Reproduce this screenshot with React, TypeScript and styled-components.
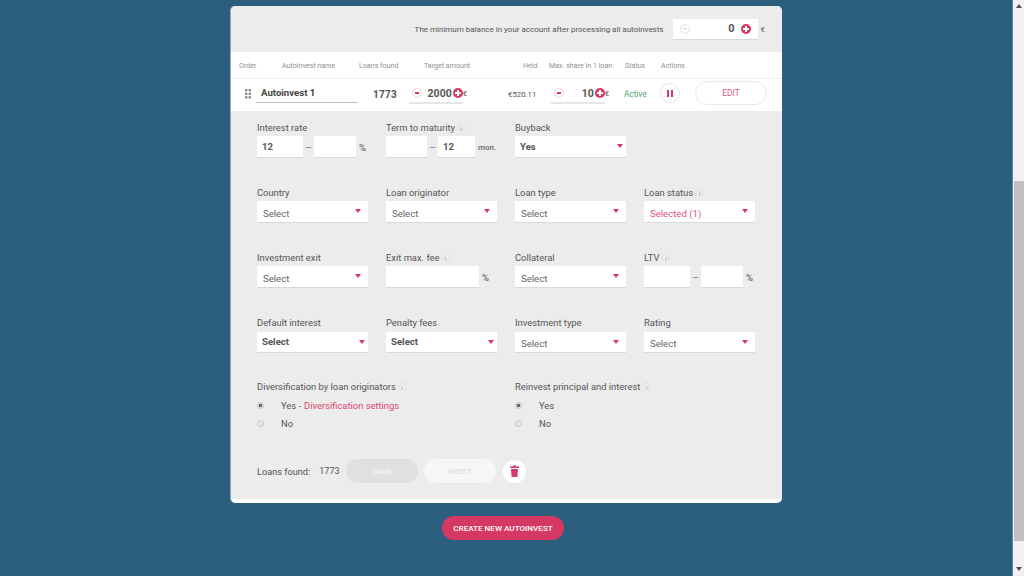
import React from "react";
import styled, { createGlobalStyle } from "styled-components";

const Global = createGlobalStyle`
  html, body { margin: 0; padding: 0; height: 576px; overflow: hidden; }
  body { background: #2c5e7e; font-family: Roboto, "Noto Sans", sans-serif; color: #555; }
  #root { height: 576px; }
  * { box-sizing: border-box; }
`;

const Page = styled.div`display: flex; height: 576px;`;
const Main = styled.main`flex: 1; display: flex; flex-direction: column; align-items: center; padding-top: 6px;`;
const Scrollbar = styled.aside`
  width: 12px; background: #f1f1f1; border-left: 1px solid #5a84a0;
  display: flex; flex-direction: column; align-items: center; padding: 4px 0 5px;
`;
const ArrowUp = styled.div`width: 0; height: 0; border-left: 3px solid transparent; border-right: 3px solid transparent; border-bottom: 4px solid #505050;`;
const ArrowDown = styled.div`width: 0; height: 0; border-left: 3px solid transparent; border-right: 3px solid transparent; border-top: 4px solid #505050;`;
const Thumb = styled.div`width: 10px; height: 360px; background: #c1c1c1; margin: 173px 0 auto;`;

const Card = styled.section`
  width: 552px; height: 497px; background: #fff; border-radius: 5px; overflow: hidden;
  border-left: 1px solid #8fabbd; display: flex; flex-direction: column;
`;
const TopStrip = styled.div`
  height: 46px; background: #ececec; display: flex; align-items: center; justify-content: flex-end;
  padding: 0 17px 0 0; gap: 9px; font-size: 8px; color: #555;
`;
const TopBox = styled.div`
  width: 85px; height: 21px; background: #fff; border-bottom: 1px solid #d9d9d9;
  display: flex; align-items: center; padding: 0 7px; font-size: 11px; font-weight: 700; color: #555;
`;
const Unit = styled.span`font-size: 8px; color: #666;`;
const TopGroup = styled.div`display: flex; align-items: center; gap: 3px;`;

const HeaderRow = styled.div`
  height: 27px; display: flex; align-items: center; padding-left: 8px; border-bottom: 1px solid #eee;
  background: #fff; font-size: 7.1px; color: #8f8f8f;
`;
const HeaderCell = styled.span<{ $w: number }>`width: ${p => p.$w}px; flex: none; white-space: nowrap;`;

const Row = styled.div`height: 32px; display: flex; align-items: center; padding: 0 0 4px 13px; background: #fff;`;
const Drag = styled.svg`width: 8px; height: 10px; flex: none; margin: 2px 4px 0 0;`;
const NameBox = styled.div`
  width: 102px; height: 19px; border-bottom: 1px solid #bbb; padding: 0 0 0 5px; margin-right: 15px;
  font-size: 9.6px; font-weight: 700; line-height: 17px; color: #444; flex: none;
`;
const Found = styled.span`width: 36px; flex: none; margin-top: 2px; font-size: 10px; font-weight: 700; color: #555; letter-spacing: .3px;`;
const Stepper = styled.div`
  width: 54px; height: 21px; flex: none; display: flex; align-items: center; padding: 2px 0 0 3px;
  border-bottom: 2px solid #e6e6e6; font-size: 10.5px; font-weight: 700; color: #555;
`;
const Minus = styled.span<{ $pale?: boolean }>`
  width: 10px; height: 10px; border-radius: 50%; flex: none; background: #fff;
  border: 1px solid ${p => (p.$pale ? "#e4e4e4" : "#f3d6de")}; position: relative;
  &::after { content: ""; position: absolute; left: 2px; top: 3.25px; width: 4px; height: 1.5px; background: ${p => (p.$pale ? "#d8d8d8" : "#d63864")}; }
`;
const Plus = styled.span`
  width: 10px; height: 10px; border-radius: 50%; flex: none; background: #d63864; position: relative; margin-left: 1px;
  &::before { content: ""; position: absolute; left: 2px; top: 4px; width: 6px; height: 2px; background: #fff; }
  &::after { content: ""; position: absolute; left: 4px; top: 2px; width: 2px; height: 6px; background: #fff; }
`;
const TopPlus = styled(Plus)`margin-left: 6px;`;
const Value = styled.span`margin-left: auto;`;
const Euro = styled.span`font-size: 7.5px; color: #777; margin-right: -4px;`;
const Held = styled.span`width: 43px; margin: 2px 0 0 45px; flex: none; font-size: 7.8px; color: #555;`;
const Active = styled.span`width: 36px; margin: 2px 0 0 19px; flex: none; font-size: 8.2px; color: #3fa866;`;
const Pause = styled.button`
  width: 20px; height: 20px; border: 1px solid #e6e6e6; border-radius: 50%; background: #fff; padding: 0; flex: none;
  display: flex; align-items: center; justify-content: center; gap: 2px;
  span { width: 2px; height: 7px; background: #d63864; }
`;
const EditBtn = styled.button`
  width: 72px; height: 24px; margin-left: 15px; border: 1px solid #e9e9e9; border-radius: 12px; background: #fff; flex: none;
  color: #d9577c; font: 400 8.4px Roboto, sans-serif;
`;

const Body = styled.div`
  flex: 1; background: #ececec; padding: 9px 0 0 26px; margin-bottom: 4px; display: flex; flex-direction: column;
`;
const Grid = styled.div`display: grid; grid-template-columns: repeat(4, 129px); grid-template-rows: 38px 38px 39px 37px; row-gap: 27px;`;
const Field = styled.div`display: flex; flex-direction: column;`;
const Label = styled.div`height: 16px; padding-bottom: 2px; display: flex; align-items: center; gap: 3px; font-size: 9.4px; color: #555; white-space: nowrap;`;
const Info = styled.span`
  width: 7px; height: 7px; border-radius: 50%; background: #f8f8f8; color: #d9476f; font-size: 5.5px; line-height: 6px; text-align: center; border: .5px solid #d8d8d8;
`;
const Select = styled.div<{ $bold?: boolean; $red?: boolean }>`
  width: 111px; height: 22px; background: #fff; border-bottom: 1px solid #d9d9d9; position: relative; display: flex; align-items: center;
  padding: ${p => (p.$bold ? "0 0 0 5px" : "3px 0 0 6px")}; font-size: 9.6px; font-weight: ${p => (p.$bold ? 700 : 400)};
  color: ${p => (p.$red ? "#d9577c" : p.$bold ? "#555" : "#666")};
  &::after { content: ""; position: absolute; right: ${p => (p.$bold ? 3 : 7)}px; top: 8px; border-left: 3px solid transparent; border-right: 3px solid transparent; border-top: 4px solid #d63864; }
`;
const Controls = styled.div`display: flex; align-items: center;`;
const Input = styled.div<{ $w: number }>`
  width: ${p => p.$w}px; height: 22px; background: #fff; border-bottom: 1px solid #d9d9d9; padding-left: 5px; flex: none;
  font-size: 9.6px; font-weight: 700; line-height: 21px; color: #555;
`;
const Dash = styled.span`width: 11px; text-align: center; flex: none; font-size: 11px; color: #888;`;
const Suffix = styled.span<{ $size?: number }>`margin-left: 3px; font-size: ${p => p.$size ?? 9.5}px; font-weight: 500; color: #666;`;

const Radios = styled.div`display: grid; grid-template-columns: repeat(2, 258px); margin-top: 26px;`;
const RadioHead = styled(Label)`margin-bottom: 1px;`;
const RadioRow = styled.div`height: 18px; display: flex; align-items: center; font-size: 9.4px; color: #555;`;
const RadioDot = styled.span<{ $on?: boolean }>`
  width: 7px; height: 7px; margin-right: 17px; border-radius: 50%; border: 1px solid #c4c4c4; flex: none;
  background: ${p => (p.$on ? "radial-gradient(circle, #666 0 1.6px, #ddd 2px)" : "#e6e6e6")};
`;
const Link = styled.span`color: #d9476f; margin-left: 3px;`;

const Footer = styled.div`display: flex; align-items: center; margin-top: 27px; height: 24px; font-size: 9.2px; color: #555;`;
const FoundVal = styled.span`margin-left: 9px; width: 27px; font-size: 9px; flex: none;`;
const Btn = styled.button<{ $bg: string; $fg: string }>`
  width: 72px; height: 24px; border: 0; border-radius: 12px; background: ${p => p.$bg}; color: ${p => p.$fg}; margin-right: 6px;
  font: 600 8px Roboto, sans-serif; padding: 0;
`;
const Trash = styled.button`
  width: 23px; height: 23px; margin-left: 1px; border: 0; border-radius: 50%; background: #fff; padding: 0;
  display: flex; align-items: center; justify-content: center;
`;
const Create = styled.button`
  margin: 13px 6px 0 0; width: 122px; height: 24px; border: 0; border-radius: 12px; background: #d63864; color: #fff;
  font: 500 8.1px Roboto, sans-serif; padding: 0; flex: none;
`;

const Sel = ({ label, info, value = "Select", bold, red }: { label: string; info?: boolean; value?: string; bold?: boolean; red?: boolean }) => (
  <Field>
    <Label>{label}{info && <Info>i</Info>}</Label>
    <Select $bold={bold} $red={red}>{value}</Select>
  </Field>
);

const Stp = ({ v }: { v: string }) => (
  <Stepper><Minus /><Value>{v}</Value><Plus /><Euro>€</Euro></Stepper>
);

export default function App() {
  return (
    <Page>
      <Global />
      <Main>
        <Card>
          <TopStrip>
            <span>The minimum balance in your account after processing all autoinvests</span>
            <TopGroup>
              <TopBox><Minus $pale /><Value>0</Value><TopPlus /></TopBox>
              <Unit>€</Unit>
            </TopGroup>
          </TopStrip>
          <HeaderRow>
            <HeaderCell $w={43}>Order</HeaderCell>
            <HeaderCell $w={77}>Autoinvest name</HeaderCell>
            <HeaderCell $w={65}>Loans found</HeaderCell>
            <HeaderCell $w={99}>Target amount</HeaderCell>
            <HeaderCell $w={26}>Held</HeaderCell>
            <HeaderCell $w={76}>Max. share in 1 loan</HeaderCell>
            <HeaderCell $w={36}>Status</HeaderCell>
            <HeaderCell $w={30}>Actions</HeaderCell>
          </HeaderRow>
          <Row>
            <Drag viewBox="0 0 8 10" fill="#8a8a8a">
              <rect x="1" y="0" width="2.4" height="2.4" /><rect x="4.6" y="0" width="2.4" height="2.4" />
              <rect x="1" y="3.6" width="2.4" height="2.4" /><rect x="4.6" y="3.6" width="2.4" height="2.4" />
              <rect x="1" y="7.2" width="2.4" height="2.4" /><rect x="4.6" y="7.2" width="2.4" height="2.4" />
            </Drag>
            <NameBox>Autoinvest 1</NameBox>
            <Found>1773</Found>
            <Stp v="2000" />
            <Held>€520.11</Held>
            <Stp v="10" />
            <Active>Active</Active>
            <Pause><span /><span /></Pause>
            <EditBtn>EDIT</EditBtn>
          </Row>
          <Body>
            <Grid>
              <Field>
                <Label>Interest rate</Label>
                <Controls><Input $w={46}>12</Input><Dash>–</Dash><Input $w={42} /><Suffix>%</Suffix></Controls>
              </Field>
              <Field>
                <Label>Term to maturity<Info>i</Info></Label>
                <Controls><Input $w={41} /><Dash>–</Dash><Input $w={37}>12</Input><Suffix $size={8}>mon.</Suffix></Controls>
              </Field>
              <Sel label="Buyback" value="Yes" bold />
              <div />
              <Sel label="Country" />
              <Sel label="Loan originator" />
              <Sel label="Loan type" />
              <Sel label="Loan status" info value="Selected (1)" red />
              <Sel label="Investment exit" />
              <Field>
                <Label>Exit max. fee<Info>i</Info></Label>
                <Controls><Input $w={93} /><Suffix>%</Suffix></Controls>
              </Field>
              <Sel label="Collateral" />
              <Field>
                <Label>LTV<Info>i</Info></Label>
                <Controls><Input $w={46} /><Dash>–</Dash><Input $w={42} /><Suffix>%</Suffix></Controls>
              </Field>
              <Sel label="Default interest" value="Select" bold />
              <Sel label="Penalty fees" value="Select" bold />
              <Sel label="Investment type" />
              <Sel label="Rating" />
            </Grid>
            <Radios>
              <div>
                <RadioHead>Diversification by loan originators<Info>i</Info></RadioHead>
                <RadioRow><RadioDot $on />Yes -<Link>Diversification settings</Link></RadioRow>
                <RadioRow><RadioDot />No</RadioRow>
              </div>
              <div>
                <RadioHead>Reinvest principal and interest<Info>i</Info></RadioHead>
                <RadioRow><RadioDot $on />Yes</RadioRow>
                <RadioRow><RadioDot />No</RadioRow>
              </div>
            </Radios>
            <Footer>
              <span>Loans found:</span>
              <FoundVal>1773</FoundVal>
              <Btn $bg="#e0e0e0" $fg="#f5f5f5">SAVE</Btn>
              <Btn $bg="#f7f7f7" $fg="#e0e0e0">RESET</Btn>
              <Trash>
                <svg width="9" height="12" viewBox="0 0 9 12" fill="#d63864">
                  <path d="M3 0.5h3v1h3v1.6H0V1.5h3z" /><path d="M1 4h7l-.6 8H1.6z" />
                </svg>
              </Trash>
            </Footer>
          </Body>
        </Card>
        <Create>CREATE NEW AUTOINVEST</Create>
      </Main>
      <Scrollbar><ArrowUp /><Thumb /><ArrowDown /></Scrollbar>
    </Page>
  );
}
